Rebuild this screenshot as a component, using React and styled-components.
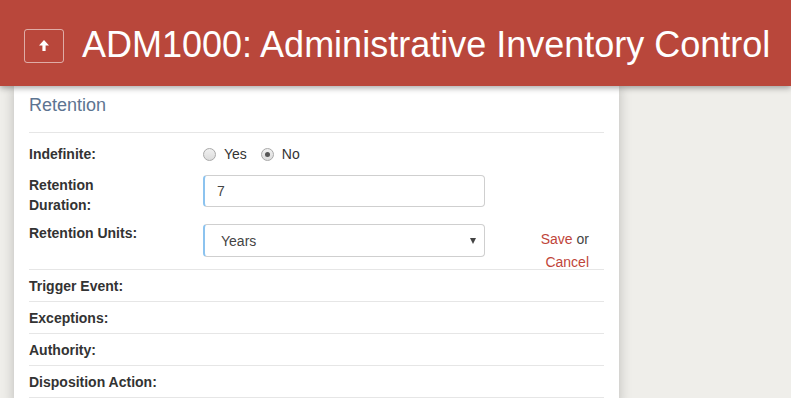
import React from 'react';
import styled, { createGlobalStyle } from 'styled-components';

const GlobalStyle = createGlobalStyle`
  html, body {
    margin: 0;
    padding: 0;
    background: #efeeea;
    font-family: "Liberation Sans", Arial, sans-serif;
    font-size: 14px;
    color: #333;
    overflow: hidden;
  }
`;

const Page = styled.div`
  height: 398px;
  overflow: hidden;
`;

const Header = styled.header`
  position: relative;
  z-index: 2;
  height: 86px;
  background: #b9473b;
  display: flex;
  align-items: center;
  padding: 0 24px;
  box-sizing: border-box;
  box-shadow: 0 2px 6px rgba(0, 0, 0, 0.35);
`;

const UpButton = styled.button`
  width: 40px;
  height: 34px;
  margin-top: 5px;
  border: 1px solid rgba(255, 255, 255, 0.55);
  border-radius: 3px;
  background: transparent;
  display: flex;
  align-items: center;
  justify-content: center;
  padding: 0;
  flex-shrink: 0;
`;

const Title = styled.h1`
  margin: 0 0 0 18px;
  padding-top: 3px;
  font-size: 36px;
  font-weight: normal;
  color: #fff;
  white-space: nowrap;
`;

const Card = styled.section`
  position: relative;
  z-index: 1;
  width: 605px;
  margin-left: 14px;
  background: #fff;
  padding: 0 15px;
  box-sizing: border-box;
  box-shadow: 0 0 12px rgba(0, 0, 0, 0.22);
  min-height: 320px;
`;

const Heading = styled.h3`
  margin: 0;
  padding: 8px 0 16px;
  line-height: 22px;
  font-size: 18px;
  font-weight: normal;
  color: #5d7491;
  border-bottom: 1px solid #e6e6e6;
`;

const EditRow = styled.div`
  display: flex;
  align-items: flex-start;
  margin-top: ${p => p.$top}px;
  height: ${p => p.$height}px;
  border-bottom: ${p => (p.$last ? '1px solid #e6e6e6' : 'none')};
`;

const Label = styled.div`
  width: 115px;
  margin-right: 59px;
  font-size: 14px;
  font-weight: bold;
  line-height: ${p => p.$lh || 18}px;
  color: #333;
`;

const Radios = styled.div`
  display: flex;
  align-items: center;
  height: 18px;
  gap: 8px;
`;

const RadioOption = styled.label`
  display: flex;
  align-items: center;
  gap: 8px;
  font-size: 14px;
  margin-right: 6px;
  color: #333;
`;

const RadioDot = styled.span`
  width: 11px;
  height: 11px;
  border-radius: 50%;
  border: 1px solid #a9a9a9;
  background: linear-gradient(#f0f0f0, #dcdcdc);
  display: flex;
  align-items: center;
  justify-content: center;
  &::after {
    content: '';
    width: 5px;
    height: 5px;
    border-radius: 50%;
    background: ${p => (p.$checked ? '#555' : 'transparent')};
  }
`;

const TextInput = styled.div`
  width: 282px;
  height: 32px;
  box-sizing: border-box;
  border: 1px solid #cfcfcf;
  border-left: 2px solid #8cc3ef;
  border-radius: 4px;
  padding-left: 12px;
  display: flex;
  align-items: center;
  font-size: 14px;
  color: #444;
`;

const Select = styled(TextInput)`
  height: 33px;
  padding: 0 8px 0 16px;
  justify-content: space-between;
`;

const Caret = styled.span`
  width: 0;
  height: 0;
  border-left: 3px solid transparent;
  border-right: 3px solid transparent;
  border-top: 6px solid #444;
`;

const Actions = styled.div`
  margin-left: auto;
  margin-right: 15px;
  margin-top: 4px;
  width: 52px;
  text-align: right;
  line-height: 23px;
  font-size: 14px;
  color: #444;
`;

const ActionLink = styled.a`
  color: #c0453a;
  text-decoration: none;
`;

const ViewRow = styled.div`
  height: 31px;
  display: flex;
  align-items: center;
  border-bottom: 1px solid #e6e6e6;
  font-size: 14px;
  font-weight: bold;
  color: #333;
`;

function ArrowUp() {
  return (
    <svg width="10" height="11" viewBox="0 0 10 11">
      <path d="M5 0 L10 5.5 L6.6 5.5 L6.6 11 L3.4 11 L3.4 5.5 L0 5.5 Z" fill="#fff" />
    </svg>
  );
}

const staticRows = ['Trigger Event:', 'Exceptions:', 'Authority:', 'Disposition Action:'];

export default function App() {
  return (
    <Page>
      <GlobalStyle />
      <Header>
        <UpButton>
          <ArrowUp />
        </UpButton>
        <Title>ADM1000: Administrative Inventory Control</Title>
      </Header>
      <Card>
        <Heading>Retention</Heading>
        <EditRow $top={12} $height={18}>
          <Label>Indefinite:</Label>
          <Radios>
            <RadioOption>
              <RadioDot />
              Yes
            </RadioOption>
            <RadioOption>
              <RadioDot $checked />
              No
            </RadioOption>
          </Radios>
        </EditRow>
        <EditRow $top={12} $height={32}>
          <Label $lh={20}>Retention Duration:</Label>
          <TextInput>7</TextInput>
        </EditRow>
        <EditRow $top={17} $height={45} $last>
          <Label>Retention Units:</Label>
          <Select>
            Years
            <Caret />
          </Select>
          <Actions>
            <ActionLink href="#">Save</ActionLink> or <ActionLink href="#">Cancel</ActionLink>
          </Actions>
        </EditRow>
        {staticRows.map(r => (
          <ViewRow key={r}>{r}</ViewRow>
        ))}
      </Card>
    </Page>
  );
}
